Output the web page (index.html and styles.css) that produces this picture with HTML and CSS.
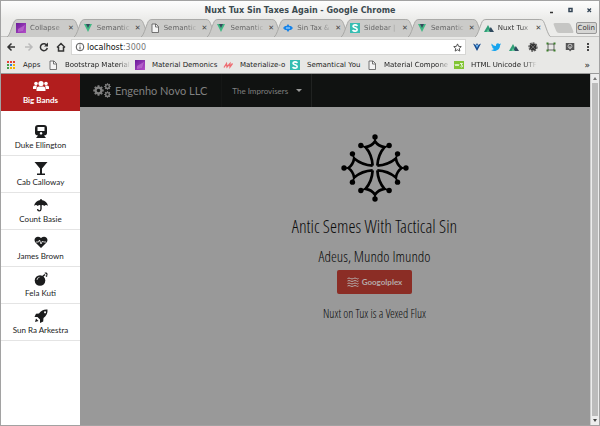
FILE: index.html
```html
<!DOCTYPE html>
<html lang="en">
<head>
<meta charset="utf-8">
<title>Nuxt Tux Sin Taxes Again</title>
<link rel="stylesheet" href="styles.css">
</head>
<body>
<svg class="defs" aria-hidden="true">
  <defs>
    <linearGradient id="violet" x1="0" y1="0" x2="1" y2="1"><stop offset="0" stop-color="#6a1b9a"/><stop offset="1" stop-color="#b54fc8"/></linearGradient>
    <symbol id="purple" viewBox="0 0 10 10"><path fill="url(#violet)" d="M0 0h10v10H0z"/><path fill="#c779d6" opacity=".6" d="M2 6l7-4-2 6-5 1z"/></symbol>
    <symbol id="vue" viewBox="0 0 10 10"><path fill="#41b883" d="M1 1h8L5 9z"/><path fill="#35495e" d="M3 1h4L5 5z"/></symbol>
    <symbol id="page" viewBox="0 0 10 10"><path fill="#f4f4f4" stroke="#555" stroke-width=".8" d="M2 1h4l2.500 2.500V9.500H2z"/><path fill="none" stroke="#555" stroke-width=".8" d="M5.500 1v3h3"/></symbol>
    <symbol id="blue" viewBox="0 0 10 10"><path fill="#1783e8" d="M5 1l1.500 2H8l2 2-2 2H6.500L5 9 3.500 7H2L0 5l2-2h1.500z"/><path fill="#bde0ff" d="M3 4.500h4v1H3z"/></symbol>
    <symbol id="semantic" viewBox="0 0 10 10"><path fill="#35bdb2" d="M0 0h10v10H0z"/><path fill="none" stroke="#fff" stroke-width="1.600" d="M7.500 2.800C6 1.500 3 1.500 3 3.300 3 5.200 7.200 4.500 7.200 6.700 7.200 8.500 4 8.600 2.500 7.200"/></symbol>
    <symbol id="nuxt" viewBox="0 0 10 10"><path fill="#2f9e77" d="M0 9l4-7 4 7z"/><path fill="#2f495e" d="M4 9l2.800-5L10 9z"/><path fill="#63c79b" d="M2.500 9L4 6l2 3z"/></symbol>
    <symbol id="gear" viewBox="-10 -10 20 20"><circle r="5.300" fill="none" stroke="currentColor" stroke-width="4"/><path stroke="currentColor" stroke-width="3.500" d="M0-9.500v3M0 9.500v-3M-9.500 0h3M9.500 0h-3M-6.700-6.700l2 2M6.700-6.700l-2 2M-6.700 6.700l2-2M6.700 6.700l-2-2"/></symbol>
    <symbol id="tabshape" viewBox="0 0 76 18"><path d="M0 18C3 17 6 3 8 1.500Q9 .500 11 .500H65Q67 .500 68 1.500C70 3 73 17 76 18" stroke="#a9a9a7"/></symbol>
    <g id="arm">
      <path d="M-7-7C-8-28-13-44-28-62Q-10-65 0-79Q10-65 28-62C13-44 8-28 7-7" fill="none" stroke="#000" stroke-width="8"/>
      <path d="M0-78v-10M-27-61l-14-6M27-61l14-6" stroke="#000" stroke-width="5"/>
      <circle cy="-92" r="8"/><circle cx="-42" cy="-67" r="8"/><circle cx="42" cy="-67" r="8"/>
    </g>
  </defs>
</svg>
<div class="window">
  <header class="titlebar">
    <span class="caption">Nuxt Tux Sin Taxes Again - Google Chrome</span>
    <svg class="controls" viewBox="0 0 44 10" aria-hidden="true"><path d="M1 7.500h3" stroke="#333" stroke-width="1.500"/><path d="M20 3.500h3v3h-3z" fill="none" stroke="#345" stroke-width="1.500"/><path d="M38.500 3.500l3.500 3.500M42 3.500L38.500 7" stroke="#345" stroke-width="1.300"/></svg>
  </header>
  <nav class="tabs" aria-label="Tabs">
    <div class="tab"><svg class="shape"><use href="#tabshape"/></svg><svg class="fav"><use href="#purple"/></svg><span class="label">Collapse</span><button class="close" aria-label="Close">✕</button></div>
    <div class="tab"><svg class="shape"><use href="#tabshape"/></svg><svg class="fav"><use href="#vue"/></svg><span class="label">Semantic</span><button class="close" aria-label="Close">✕</button></div>
    <div class="tab"><svg class="shape"><use href="#tabshape"/></svg><svg class="fav"><use href="#page"/></svg><span class="label">Semantic</span><button class="close" aria-label="Close">✕</button></div>
    <div class="tab"><svg class="shape"><use href="#tabshape"/></svg><svg class="fav"><use href="#vue"/></svg><span class="label">Semantic</span><button class="close" aria-label="Close">✕</button></div>
    <div class="tab"><svg class="shape"><use href="#tabshape"/></svg><svg class="fav"><use href="#blue"/></svg><span class="label">Sin Tax &amp;</span><button class="close" aria-label="Close">✕</button></div>
    <div class="tab"><svg class="shape"><use href="#tabshape"/></svg><svg class="fav"><use href="#semantic"/></svg><span class="label">Sidebar |</span><button class="close" aria-label="Close">✕</button></div>
    <div class="tab"><svg class="shape"><use href="#tabshape"/></svg><svg class="fav"><use href="#vue"/></svg><span class="label">Semantic</span><button class="close" aria-label="Close">✕</button></div>
    <div class="tab current"><svg class="shape"><use href="#tabshape"/></svg><svg class="fav"><use href="#nuxt"/></svg><span class="label">Nuxt Tux</span><button class="close" aria-label="Close">✕</button></div>
    <button class="newtab" aria-label="New tab"></button>
    <button class="profile">Colin</button>
  </nav>
  <div class="toolbar">
    <svg class="navicons" viewBox="0 0 60 12" fill="none" stroke="#333" stroke-width="1.500" aria-hidden="true"><path d="M9 6H2M5.500 2.500L2 6l3.500 3.500"/><path stroke="#bbb" d="M19 6h7M22.500 2.500L26 6l-3.500 3.500"/><path d="M41 4.500A3.500 3.500 0 1 0 41.300 7"/><path fill="#333" stroke="none" d="M42 1.500v4h-4z"/><path d="M51 6.500L55 2.500l4 4M52.500 6v4h5V6" /></svg>
    <div class="address">
      <svg class="info" viewBox="0 0 10 10" aria-hidden="true"><circle cx="5" cy="5" r="3.800" fill="none" stroke="#555"/><path stroke="#555" d="M5 4.500V7.500M5 2.500v1"/></svg>
      <span class="url">localhost<span class="port">:3000</span></span>
      <svg class="star" viewBox="0 0 10 10" aria-hidden="true"><path fill="none" stroke="#444" d="M5 1l1.200 2.700 3 .3-2.200 2 .6 3L5 7.500 2.400 9 3 6 .800 4l3-.3z"/></svg>
    </div>
    <div class="extensions" aria-hidden="true">
      <svg viewBox="0 0 10 10"><path fill="#174a8c" d="M1 1.500l3 1.500 1-2 1 2 3-1.500L5 9z"/><path fill="#6bb8f5" d="M3.500 3h3L5 6z"/></svg>
      <svg viewBox="0 0 10 10"><path fill="#16a4ee" d="M.500 1.500Q2.500 4 5 4C4.700 1.500 7 .500 8.300 2L10 1.500 9 3.500C9 8 4 10.500 0 8Q2 8 3 7 1.500 6.500 1 5.200h1Q.500 4.500.500 3.300z"/></svg>
      <svg><use href="#nuxt"/></svg>
      <svg viewBox="0 0 10 10"><circle cx="5" cy="5" r="3.400" fill="#333"/><circle cx="5" cy="5" r="4" fill="none" stroke="#555" stroke-width="1.300" stroke-dasharray="2 1"/><path stroke="#999" stroke-width=".5" d="M3 3l4 4M7 3L3 7"/></svg>
      <svg viewBox="0 0 10 10"><path fill="none" stroke="#444" stroke-width=".8" d="M2 2h6v6H2z"/><path fill="#3b7d2b" d="M.500.500h2v2h-2zM7.500.500h2v2h-2zM.500 7.500h2v2h-2zM7.500 7.500h2v2h-2z"/></svg>
      <svg viewBox="0 0 10 10"><path fill="#555" d="M.800 1h8.500v7H6.500L5 9.500 4 8H.800z"/><circle cx="5" cy="4.200" r="2" fill="none" stroke="#ddd" stroke-width=".8"/><path stroke="#ddd" stroke-width=".8" d="M5 4v3"/></svg>
      <svg viewBox="0 0 10 10"><path fill="#444" d="M4 1h2v2H4zM4 4h2v2H4zM4 7h2v2H4z"/></svg>
    </div>
  </div>
  <nav class="bookmarks" aria-label="Bookmarks">
    <a href="#" class="apps"><svg class="fav" viewBox="0 0 10 10"><path fill="#e34133" d="M1 1h2v2H1zM4 1h2v2H4zM7 1h2v2H7z"/><path fill="#43a047" d="M1 4h2v2H1z"/><path fill="#2f7de1" d="M4 4h2v2H4z"/><path fill="#f4b400" d="M7 4h2v2H7zM4 7h2v2H4zM7 7h2v2H7z"/><path fill="#43a047" d="M1 7h2v2H1z"/></svg><span>Apps</span></a>
    <a href="#"><svg class="fav"><use href="#page"/></svg><span class="fade">Bootstrap Material</span></a>
    <a href="#" class="wide"><svg class="fav"><use href="#purple"/></svg><span>Material Demonics</span></a>
    <a href="#" class="short"><svg class="fav" viewBox="0 0 10 10"><path fill="none" stroke="#ee6e73" stroke-width="1.300" d="M1 7.500L3.500 3.500 4 7l3-3.500L7 7l2.500-3.500"/></svg><span>Materialize-o</span></a>
    <a href="#" class="medium"><svg class="fav"><use href="#semantic"/></svg><span>Semantical You</span></a>
    <a href="#"><svg class="fav"><use href="#page"/></svg><span class="fade">Material Compone</span></a>
    <a href="#"><svg class="fav" viewBox="0 0 10 10"><path fill="#82c535" d="M0 1h10v8H0z"/><path fill="none" stroke="#fff" stroke-width=".8" d="M1 4l1 2 1-2 1 2 1-2M6 3.500h2.500L7 5q2 0 1.500 1.500-1 1-2 0"/></svg><span class="fade">HTML Unicode UTF</span></a>
    <span class="more">»</span>
  </nav>
  <div class="viewport">
    <div class="stage">
      <nav class="sidebar" aria-label="Bands">
        <a href="#" class="item active"><svg viewBox="0 0 16 12"><circle cx="8" cy="3.500" r="2.600"/><circle cx="3" cy="3.500" r="1.800"/><circle cx="13" cy="3.500" r="1.800"/><path d="M3.500 11V9Q3.500 6.500 6 6.500h4q2.500 0 2.500 2.500v2zM0 9V7q0-1.500 2-1.500h2L3 9zM16 9V7q0-1.500-2-1.500h-2L13 9z"/></svg>Big Bands</a>
        <a href="#" class="item first"><svg viewBox="0 0 14 14"><path fill-rule="evenodd" d="M4 1h6q3 0 3 3v5q0 2-3 2.500L12 14H2l2-2.500Q1 11 1 9V4q0-3 3-3zM3.500 3v4h7V3zM7 8a1.300 1.300 0 1 0 .100 0z"/></svg>Duke Ellington</a>
        <a href="#" class="item"><svg viewBox="0 0 14 14"><path d="M.500 1h13L8 7.500v5h3V14H3v-1.500h3v-5z"/></svg>Cab Calloway</a>
        <a href="#" class="item"><svg viewBox="0 0 14 14"><path d="M6.300 1h1.400v1Q13 3 14 8q-2-2-3.800 0Q9 6.500 7.700 7.200V11Q7.500 13.500 5.200 13.500 3 13.500 3 11h1.300q.1 1.200 1 1.200 1 0 1-1.200V7.200Q5 6.500 3.800 8 2 6 0 8q1-5 6.300-6z"/></svg>Count Basie</a>
        <a href="#" class="item"><svg viewBox="0 0 14 14"><path d="M7 13L1.500 7.500C-1.500 4 3-.5 7 3c4-3.500 8.500 1 5.500 4.500z"/><path fill="none" stroke="#fff" stroke-width=".8" d="M2 7h2.500l1-2 1.500 4 1.500-3 1 1h2.500"/></svg>James Brown</a>
        <a href="#" class="item"><svg viewBox="0 0 14 14"><circle cx="6" cy="8.500" r="5.300"/><path fill="none" stroke="#1b1c1d" stroke-width="1.500" d="M8 5l3-2.500M11.500.500v1M13.500 2.500h-1M13 1l-1 1M13 4.500l-1-1"/><path fill="none" stroke="#fff" stroke-width=".7" d="M3 8q0-2.500 2.500-2.700"/></svg>Fela Kuti</a>
        <a href="#" class="item"><svg viewBox="0 0 14 14"><path fill-rule="evenodd" d="M13.500.500Q14 6 9.500 9l-.3 3.500L6 14V10.500L3.500 8H.500L2 4.800 5 4.500Q8 0 13.500.500zM11 2.200a1 1 0 1 0 .1 0z"/><path d="M1 13l1-3.500 2.500 2.500z"/></svg>Sun Ra Arkestra</a>
      </nav>
      <div class="pusher">
        <nav class="menu" aria-label="Main">
          <a href="#" class="brand"><span class="gears" aria-hidden="true"><svg><use href="#gear"/></svg><span><svg><use href="#gear"/></svg><svg><use href="#gear"/></svg></span></span>Engenho Novo LLC</a>
          <button class="dropdown">The Improvisers<i></i></button>
        </nav>
        <main>
          <svg class="cross" viewBox="-101 -101 202 202" role="img" aria-label="Occitan cross"><use href="#arm"/><use href="#arm" transform="rotate(90)"/><use href="#arm" transform="rotate(180)"/><use href="#arm" transform="rotate(270)"/></svg>
          <h1>Antic Semes With Tactical Sin</h1>
          <h2>Adeus, Mundo Imundo</h2>
          <button class="primary"><svg viewBox="0 0 12 10" fill="none" stroke="currentColor" aria-hidden="true"><path d="M.5 1.500q1.500-1 3 0t3 0 3 0 2 0M.5 4q1.500-1 3 0t3 0 3 0 2 0M.5 6.500q1.500-1 3 0t3 0 3 0 2 0M.5 9q1.500-1 3 0t3 0 3 0 2 0"/></svg>Googolplex</button>
          <p>Nuxt on Tux is a Vexed Flux</p>
        </main>
      </div>
    </div>
    <div class="scrollbar" aria-hidden="true"><i class="up"></i><i class="thumb"></i><i class="down"></i></div>
  </div>
</div>
</body>
</html>
```

FILE: styles.css
```css
* { box-sizing: border-box; }
body { margin: 0; font-family: "DejaVu Sans", sans-serif; font-size: 7px; color: #222; }
a { color: inherit; text-decoration: none; }
button { border: 0; padding: 0; margin: 0; background: none; font: inherit; color: inherit; }
svg { display: block; flex: none; }
.defs { position: absolute; width: 0; height: 0; }

.window { display: flex; flex-direction: column; min-height: 100vh; border: 1px solid #a2a2a2; background: #e8e8e6; overflow: hidden; }
.titlebar { display: grid; grid-template-columns: 50px 1fr 50px; align-items: center; height: 18px; background: linear-gradient(#fdfdfd, #ececea); }
.caption { grid-column: 2; text-align: center; font-size: 8px; font-weight: bold; color: #3c4b50; }
.controls { width: 44px; height: 10px; }

.tabs { display: flex; height: 18px; padding: 0 2px 0 6px; background: #ececea; border-bottom: 1px solid #c4c4c2; }
.tab { position: relative; isolation: isolate; display: flex; align-items: center; flex: 0 1 76px; min-width: 0; height: 18px; padding: 0 8px 0 9px; margin-right: -9px; color: #666; }
.shape { position: absolute; z-index: -1; left: 0; top: 0; width: 100%; height: 18px; fill: #cbcbc9; }
.current { color: #333; z-index: 1; }
.current .shape { fill: #e8e8e6; }
.fav { width: 10px; height: 10px; }
.label { flex: 1; min-width: 0; margin-left: 4px; overflow: hidden; white-space: nowrap; line-height: 10px; -webkit-mask-image: linear-gradient(90deg, #000 65%, transparent); mask-image: linear-gradient(90deg, #000 65%, transparent); }
.close { flex: none; width: 8px; margin-left: 2px; line-height: 10px; color: #444; }
.newtab { flex: none; width: 17px; height: 10px; margin: 4px 4px 0 13px; background: #c6c6c4; border-radius: 2px; transform: skewX(22deg); }
.profile { flex: none; height: 12px; margin: 3px 0 0 auto; padding: 0 1px; border: 1px solid #999; border-radius: 2px; background: #d6d6d4; color: #333; line-height: 10px; }

.toolbar { display: flex; align-items: center; height: 20px; padding: 0 6px 0 5px; }
.navicons { width: 60px; height: 12px; }
.address { display: flex; align-items: center; flex: 1; height: 16px; margin-left: 5px; padding: 0 3px; background: #fff; border: 1px solid #d6d6d4; }
.info { width: 10px; height: 10px; margin-right: 2px; }
.url { flex: 1; font-size: 8px; color: #111; }
.port { color: #777; }
.star { width: 9px; height: 9px; }
.extensions { display: flex; justify-content: space-between; width: 121px; margin-left: 6px; }
.extensions svg { width: 10px; height: 10px; }

.bookmarks { display: flex; align-items: center; height: 16px; padding: 0 9px 0 5px; white-space: nowrap; }
.bookmarks a { display: flex; align-items: center; gap: 7px; flex: 0 0 87px; line-height: 10px; }
.bookmarks .apps { flex-basis: 42px; }
.bookmarks .wide { flex-basis: 88px; }
.bookmarks .short { flex-basis: 67px; }
.bookmarks .medium { flex-basis: 77px; }
.fade { width: 66px; overflow: hidden; -webkit-mask-image: linear-gradient(90deg, #000 80%, transparent); mask-image: linear-gradient(90deg, #000 80%, transparent); }
.more { margin-left: auto; font-size: 9px; }

.viewport { display: flex; flex: 1; border-top: 1px solid #999; }
.stage { display: flex; flex: 1; min-width: 0; overflow: hidden; }
.sidebar { flex: 0 0 79px; background: #fff; font: 8px/10px Lato, sans-serif; color: #1b1c1d; }
.item { display: flex; flex-direction: column; align-items: center; gap: 2px; height: 37px; padding-top: 5px; border-bottom: 1px solid #e4e4e4; }
.item svg { width: 14px; height: 14px; fill: currentColor; }
.item.active { background: #b21e1e; border-color: #b21e1e; color: #fff; font-weight: bold; }
.item.active svg { width: 16px; }
.item.first { height: 45px; padding-top: 13px; }

.pusher { flex: 0 0 100%; background: #999; }
.menu { display: flex; align-items: stretch; height: 33px; background: #101211; color: #808080; font-family: Lato, sans-serif; }
.brand { display: flex; align-items: center; gap: 4px; padding: 0 14px 0 13px; border-right: 1px solid #151716; font-size: 11px; }
.gears { display: flex; align-items: center; }
.gears svg { width: 11px; height: 11px; }
.gears span { display: flex; flex-direction: column; gap: 1px; }
.gears span svg { width: 7px; height: 7px; }
.dropdown { display: flex; align-items: center; gap: 8px; padding: 0 9px 0 10px; border-right: 1px solid #202221; font-size: 8px; }
.dropdown i { border: 3px solid transparent; border-top: 3px solid #999; border-bottom: 0; }

main { display: flex; flex-direction: column; align-items: center; padding-top: 27px; font-family: "Open Sans Condensed Light", "Roboto Condensed", "Liberation Sans", sans-serif; color: #0c0c0c; }
.cross { width: 68px; height: 68px; }
h1, h2, p { margin: 0; font-weight: normal; }
h1 { margin-top: 14px; font-size: 18px; line-height: 20px; }
h2 { margin-top: 12px; font-size: 15px; line-height: 16px; }
.primary { display: flex; align-items: center; gap: 3px; height: 24px; margin-top: 6px; padding: 0 10px; border-radius: 2px; background: #8b2d25; color: #b5aaa9; font: bold 8px/10px Lato, sans-serif; }
.primary svg { width: 12px; height: 10px; }
p { margin-top: 14px; font-size: 12px; line-height: 12px; }

.scrollbar { display: flex; flex-direction: column; align-items: center; flex: 0 0 9px; background: #ededed; border-left: 1px solid #ccc; }
.up, .down { height: 9px; }
.up::before, .down::before { content: ""; display: block; margin-top: 3px; border: 2px solid transparent; border-bottom: 3px solid #777; border-top: 0; }
.down::before { border-top: 3px solid #444; border-bottom: 0; }
.thumb { flex: 1; width: 6px; background: #bcbcbc; }
```
